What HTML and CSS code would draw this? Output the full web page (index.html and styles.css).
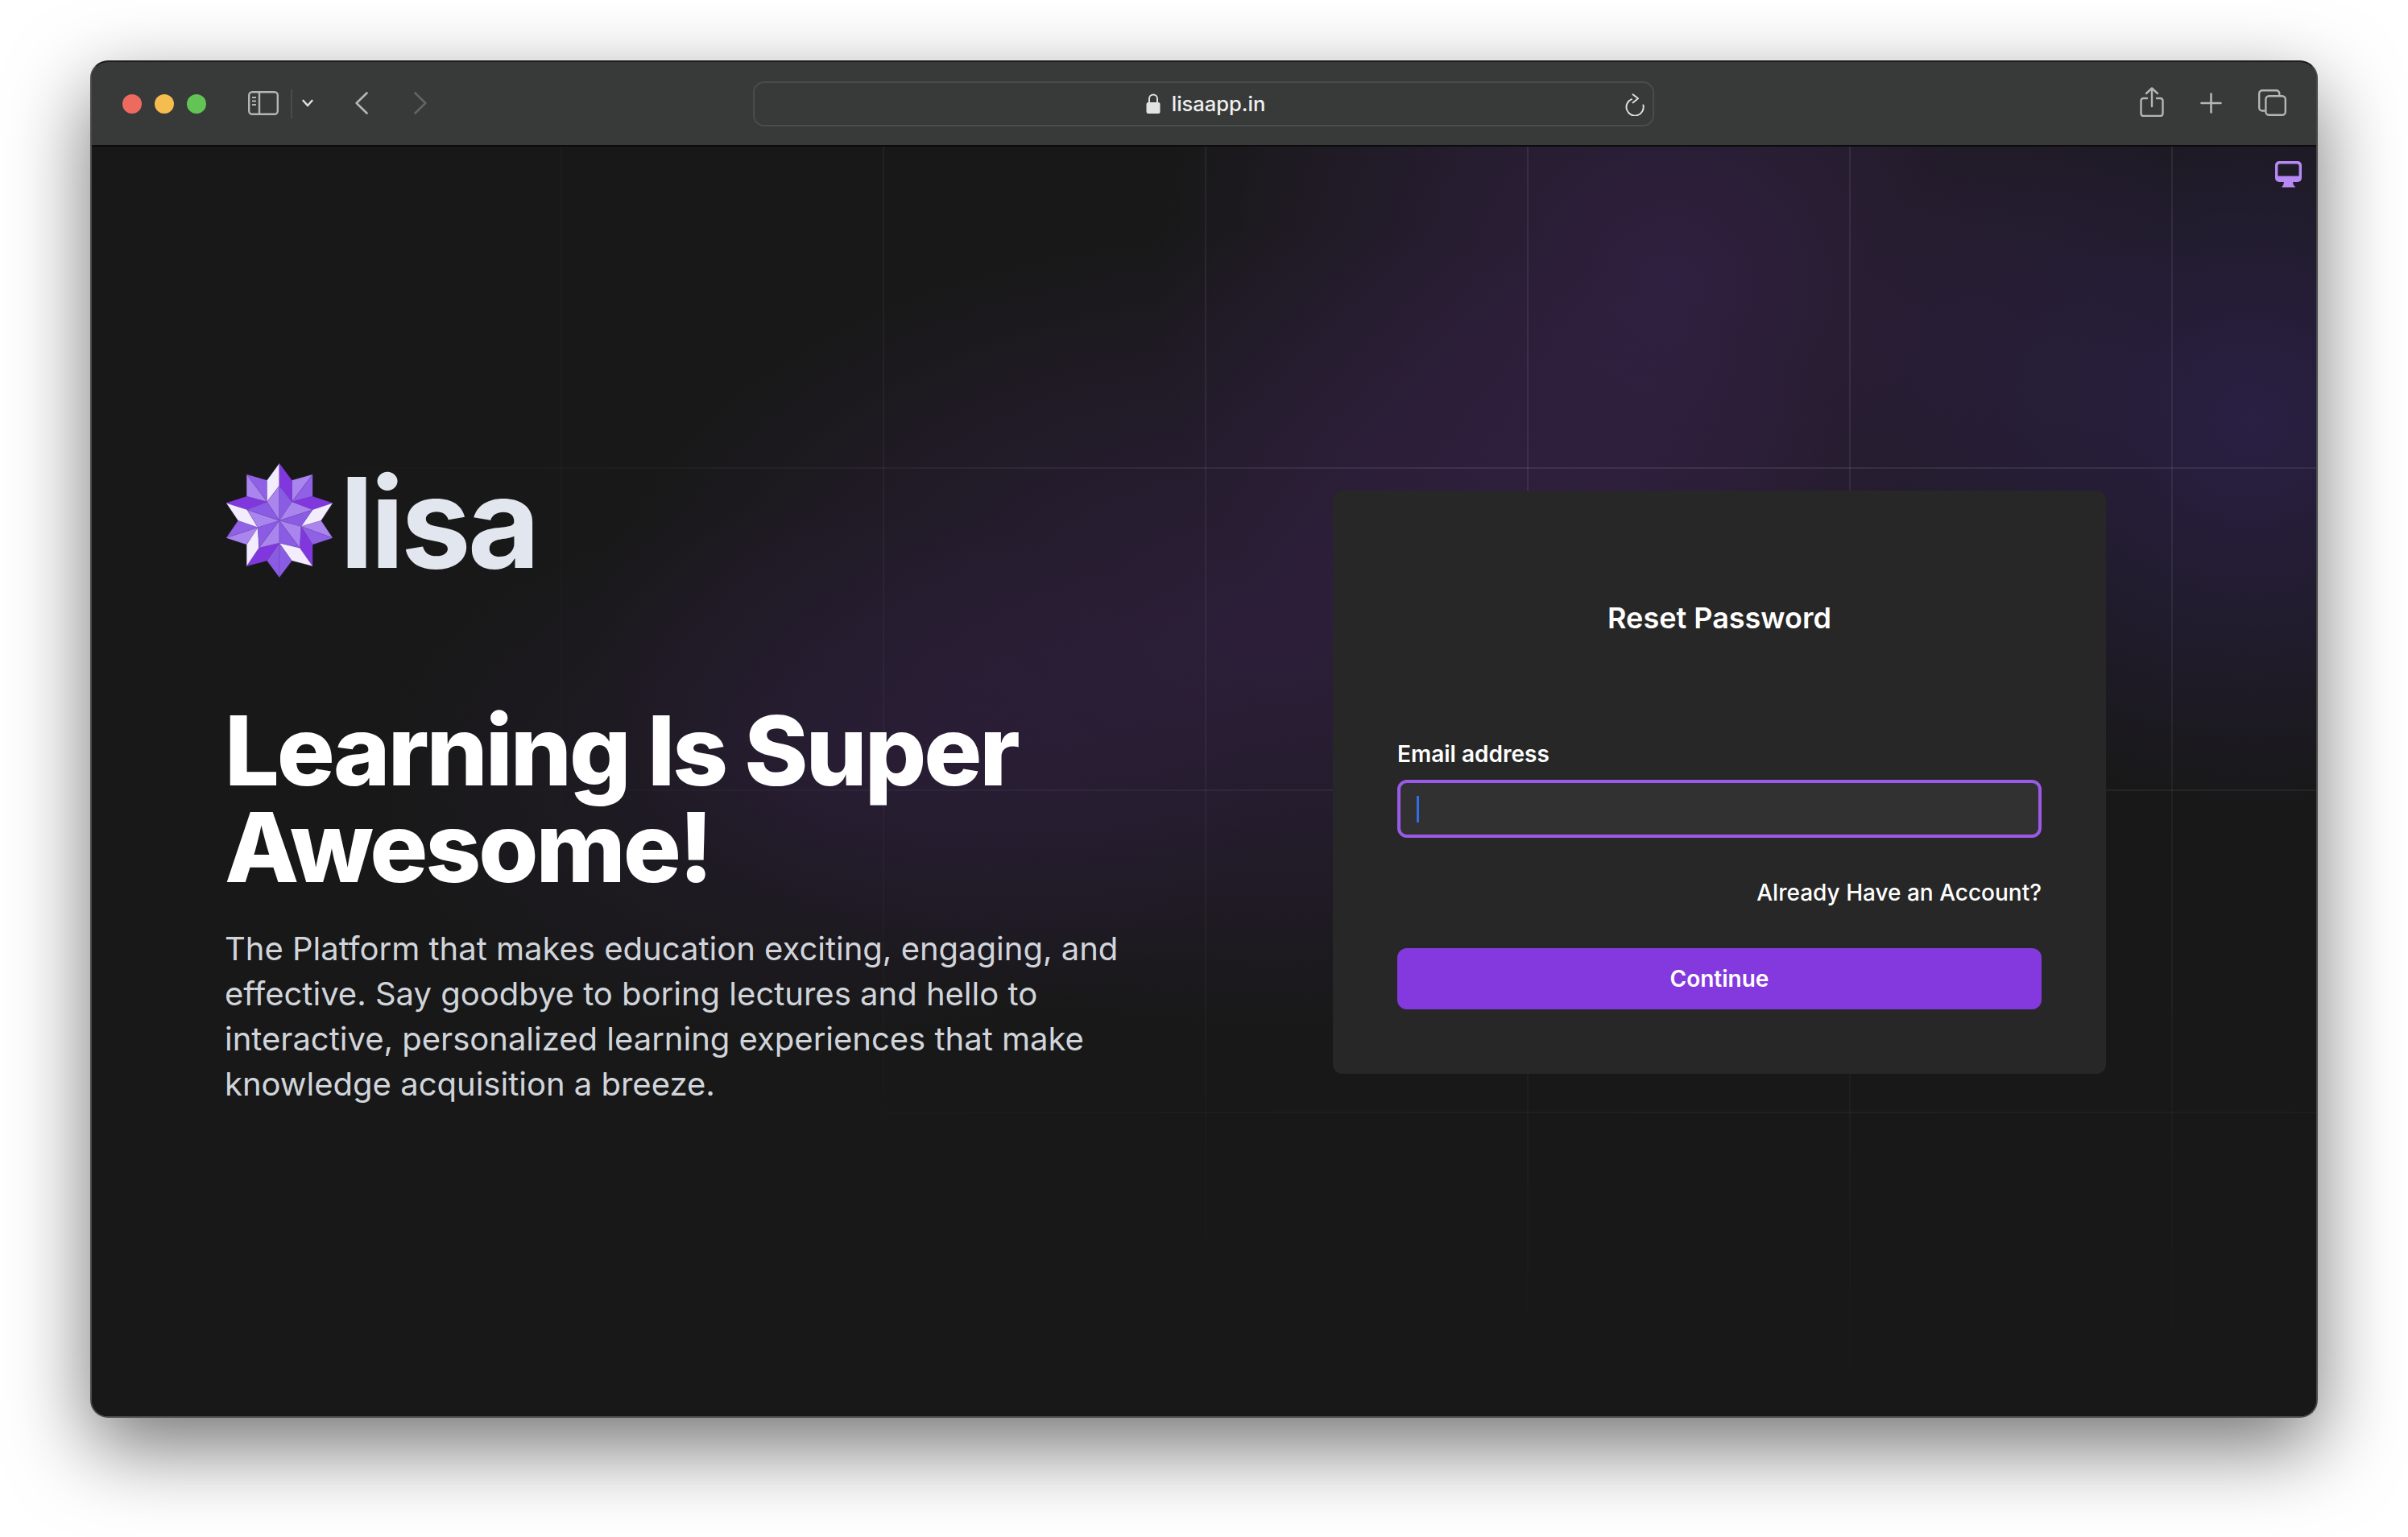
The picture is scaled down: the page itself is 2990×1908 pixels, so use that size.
FILE: index.html
```html
<!DOCTYPE html>
<html lang="en">
<head>
  <meta charset="UTF-8" />
  <title>Lisa - Reset Password</title>
  <link rel="stylesheet" href="styles.css">
</head>
<body>

  <div class="window">

    <!-- Browser toolbar -->
    <header class="toolbar">
      <div class="toolbar-left">
        <span class="light light-red"></span>
        <span class="light light-yellow"></span>
        <span class="light light-green"></span>

        <svg class="icon-sidebar" viewBox="0 0 38 30" fill="none" stroke="#b4b5b4" stroke-width="2.4">
          <rect x="1.2" y="1.2" width="35.6" height="27.6" rx="4"/>
          <path d="M14 1.2v27.6"/>
          <path d="M5 8h5M5 12.5h5M5 17h5" stroke-width="2"/>
        </svg>
        <span class="tool-divider"></span>
        <svg class="icon-chevron" viewBox="0 0 14 10" fill="none" stroke="#dcdcdc" stroke-width="2.6" stroke-linecap="round" stroke-linejoin="round">
          <path d="M1.6 2l5.4 6 5.4-6"/>
        </svg>
        <svg class="icon-back" viewBox="0 0 16 28" fill="none" stroke="#b4b5b4" stroke-width="2.6" stroke-linecap="round" stroke-linejoin="round">
          <path d="M14.5 1.5L1.7 14l12.8 12.5"/>
        </svg>
        <svg class="icon-forward" viewBox="0 0 16 28" fill="none" stroke="#626362" stroke-width="2.6" stroke-linecap="round" stroke-linejoin="round">
          <path d="M1.5 1.5L14.3 14 1.5 26.5"/>
        </svg>
      </div>

      <div class="address-bar">
        <svg class="icon-lock" viewBox="0 0 18 25">
          <path d="M4 12V6.5a5 5 0 0 1 10 0V12" fill="none" stroke="#e2e2e2" stroke-width="2"/>
          <rect x="0.5" y="11" width="17" height="14" rx="2.5" fill="#e2e2e2"/>
        </svg>
        <span class="address-text">lisaapp.in</span>
        <svg class="icon-reload" viewBox="0 0 24 28" fill="none" stroke="#e0e0e0" stroke-width="1.9" stroke-linecap="round" stroke-linejoin="round">
          <path d="M8 7.2A10.6 10.6 0 1 0 22.4 14.5"/>
          <path d="M9.5 1.2l6.5 5-6.5 5.2"/>
        </svg>
      </div>

      <div class="toolbar-right">
        <svg class="icon-share" viewBox="0 0 30 37" fill="none" stroke="#b4b5b4" stroke-width="2.4" stroke-linecap="round" stroke-linejoin="round">
          <path d="M9 14H4.5a3 3 0 0 0-3 3v16a3 3 0 0 0 3 3h21a3 3 0 0 0 3-3V17a3 3 0 0 0-3-3H21"/>
          <path d="M15 24V2M8 8l7-6.5L22 8"/>
        </svg>
        <svg class="icon-plus" viewBox="0 0 27 26" fill="none" stroke="#b4b5b4" stroke-width="2.6" stroke-linecap="round">
          <path d="M13.5 1.5v23M1.5 13h24"/>
        </svg>
        <svg class="icon-tabs" viewBox="0 0 35 33" fill="none" stroke="#b4b5b4" stroke-width="2.4">
          <path d="M8.5 26.5H5a3.8 3.8 0 0 1-3.8-3.8V5A3.8 3.8 0 0 1 5 1.2h17.5A3.8 3.8 0 0 1 26.3 5v3"/>
          <rect x="9.4" y="8.2" width="24.4" height="23.6" rx="4"/>
        </svg>
      </div>
    </header>

    <!-- Page -->
    <main class="page">
      <div class="page-grid"></div>

      <svg class="icon-monitor" viewBox="0 0 33 33">
        <path fill="#b689f4" fill-rule="evenodd" d="M5 0h23a5 5 0 0 1 5 5v16a5 5 0 0 1-5 5H5a5 5 0 0 1-5-5V5a5 5 0 0 1 5-5zM6 3.4A2.6 2.6 0 0 0 3.4 6v12.6h26.2V6A2.6 2.6 0 0 0 27 3.4z"/>
        <path fill="#b689f4" d="M11 26h11l1 4 2.5 2.5h-17.5L10 30z"/>
      </svg>

      <section class="hero">
        <div class="logo">
          <svg class="logo-star" viewBox="18 15 397 425">
            <g stroke="#7a48cf" stroke-width="0.8" stroke-linejoin="round">
              <!-- outer kites -->
              <polygon fill="#ab85ee" points="340,56 263,78 263,158"/>
              <polygon fill="#9060e5" points="340,56 263,158 340,138"/>
              <polygon fill="#ab85ee" points="415,293 372,228 297,250"/>
              <polygon fill="#9060e5" points="415,293 297,250 340,318"/>
              <polygon fill="#8a5ce3" points="216,440 263,378 216,312"/>
              <polygon fill="#8a5ce3" points="216,440 216,312 170,378"/>
              <polygon fill="#9060e5" points="18,293 136,254 62,228"/>
              <polygon fill="#ab85ee" points="18,293 94,318 136,254"/>
              <polygon fill="#9060e5" points="94,56 170,78 170,158"/>
              <polygon fill="#ab85ee" points="94,56 170,158 94,138"/>
              <!-- chevrons -->
              <polygon fill="#f2ecfd" points="216,15 170,78 170,158 216,98"/>
              <polygon fill="#8038de" points="216,15 263,78 263,158 216,98"/>
              <polygon fill="#8038de" points="415,163 340,138 263,158 340,188"/>
              <polygon fill="#f2ecfd" points="415,163 340,188 297,250 372,228"/>
              <polygon fill="#8038de" points="340,398 340,318 297,250 292,330"/>
              <polygon fill="#f2ecfd" points="340,398 292,330 216,312 263,378"/>
              <polygon fill="#8038de" points="94,398 170,378 216,312 140,330"/>
              <polygon fill="#f2ecfd" points="94,398 140,330 136,254 94,318"/>
              <polygon fill="#8038de" points="18,163 94,138 170,158 96,188"/>
              <polygon fill="#f2ecfd" points="18,163 96,188 136,254 62,228"/>
              <!-- inner kites -->
              <polygon fill="#ab85ee" points="216,228 170,158 216,98"/>
              <polygon fill="#8a5ce3" points="216,228 216,98 263,158"/>
              <polygon fill="#ab85ee" points="216,228 263,158 340,188"/>
              <polygon fill="#8a5ce3" points="216,228 340,188 297,250"/>
              <polygon fill="#ab85ee" points="216,228 297,250 292,330"/>
              <polygon fill="#8a5ce3" points="216,228 292,330 216,312"/>
              <polygon fill="#ab85ee" points="216,228 216,312 140,330"/>
              <polygon fill="#8a5ce3" points="216,228 140,330 136,254"/>
              <polygon fill="#ab85ee" points="216,228 136,254 96,188"/>
              <polygon fill="#8a5ce3" points="216,228 96,188 170,158"/>
            </g>
          </svg>
          <span class="logo-text">lisa</span>
        </div>
        <h1 class="hero-title">Learning Is Super Awesome!</h1>
        <p class="hero-copy">The Platform that makes education exciting, engaging, and effective. Say goodbye to boring lectures and hello to interactive, personalized learning experiences that make knowledge acquisition a breeze.</p>
      </section>

      <form class="card">
        <h2 class="card-title">Reset Password</h2>
        <label class="field-label">Email address</label>
        <div class="field"><span class="caret"></span></div>
        <a class="card-link">Already Have an Account?</a>
        <button class="submit-btn" type="button">Continue</button>
      </form>
    </main>

  </div>

</body>
</html>
```

FILE: styles.css
```css
html, body {
  margin: 0;
  height: 100%;
}

body {
  background: #fff;
  font-family: 'Inter', 'Liberation Sans', sans-serif;
  padding: 75px 112px 148px 112px;
  box-sizing: border-box;
  overflow: hidden;
}

/* Browser window */
.window {
  height: 100%;
  box-sizing: border-box;
  display: flex;
  flex-direction: column;
  border: 2px solid #4b4b4b;
  border-top-color: #1c1c1c;
  border-radius: 22px;
  overflow: hidden;
  box-shadow: 0 36px 100px rgba(0, 0, 0, 0.55);
  background: #181818;
}

.toolbar {
  height: 103px;
  flex: none;
  display: flex;
  align-items: center;
  background: #383a39;
  border-bottom: 2px solid #0c0c0c;
}

.toolbar-left {
  width: 821px;
  flex: none;
  box-sizing: border-box;
  display: flex;
  align-items: center;
  padding-left: 38px;
}

.light {
  width: 24px;
  height: 24px;
  border-radius: 50%;
  margin-right: 16px;
}

.light-red { background: #ee6a5f; }
.light-yellow { background: #f5bd4f; }
.light-green { background: #61c454; margin-right: 0; }

.icon-sidebar { width: 38px; height: 30px; margin-left: 52px; margin-top: -1px; }
.tool-divider { width: 2px; height: 36px; margin-left: 15px; background: #4a4c4b; }
.icon-chevron { width: 14px; height: 10px; margin-left: 12px; margin-top: -1px; }
.icon-back { width: 16px; height: 28px; margin-left: 52px; margin-top: -2px; }
.icon-forward { width: 16px; height: 28px; margin-left: 57px; margin-top: -2px; }

.address-bar {
  width: 1119px;
  height: 56px;
  flex: none;
  box-sizing: border-box;
  position: relative;
  display: flex;
  align-items: center;
  justify-content: center;
  gap: 14px;
  padding-left: 5px;
  border: 2px solid #4a4c4b;
  border-radius: 14px;
}

.icon-lock { width: 18px; height: 25px; }

.address-text {
  color: #f0f0f0;
  font-size: 25.5px;
  font-weight: 500;
}

.icon-reload {
  position: absolute;
  right: 10px;
  top: 13px;
  width: 24px;
  height: 28px;
}

.toolbar-right {
  flex: 1;
  display: flex;
  align-items: center;
  justify-content: flex-end;
  gap: 45px;
  padding-right: 37px;
}

.icon-share { width: 30px; height: 37px; margin-top: -4px; }
.icon-plus { width: 27px; height: 26px; margin-top: -2px; }
.icon-tabs { width: 35px; height: 33px; margin-top: -2px; }

/* Page */
.page {
  flex: 1;
  position: relative;
  display: flex;
  align-items: center;
  justify-content: space-between;
  padding: 2px 261px 0 165px;
  background:
    radial-gradient(ellipse 640px 620px at 1960px 170px, rgba(88, 44, 130, 0.38), rgba(88, 44, 130, 0.22) 45%, transparent),
    radial-gradient(ellipse 850px 500px at 1470px 600px, rgba(88, 44, 130, 0.32), rgba(88, 44, 130, 0.18) 50%, transparent),
    radial-gradient(ellipse 520px 480px at 2680px 340px, rgba(72, 44, 140, 0.38), rgba(72, 44, 140, 0.2) 50%, transparent),
    radial-gradient(ellipse 560px 340px at 900px 780px, rgba(84, 44, 130, 0.18), transparent),
    #181818;
}

.page-grid {
  position: absolute;
  inset: 0;
  background-image:
    linear-gradient(to right, rgba(255, 255, 255, 0.075) 2px, transparent 2px),
    linear-gradient(to bottom, rgba(255, 255, 255, 0.085) 2px, transparent 2px);
  background-size: 400px 400px;
  background-position: 182px 398px;
  -webkit-mask-image: radial-gradient(ellipse 1900px 1350px at 2100px 250px, #000 25%, transparent);
  mask-image: radial-gradient(ellipse 1900px 1350px at 2100px 250px, #000 25%, transparent);
}

.icon-monitor {
  position: absolute;
  top: 18px;
  right: 18px;
  width: 33px;
  height: 33px;
}

/* Left column */
.hero {
  position: relative;
  width: 1130px;
  margin-top: 6px;
}

.logo {
  display: flex;
  align-items: center;
  gap: 9px;
  height: 142px;
  margin-left: 2px;
}

.logo-star { width: 132px; height: 142px; flex: none; }

.logo-text {
  color: #e2e6ee;
  font-size: 155px;
  font-weight: 700;
  line-height: 150px;
  letter-spacing: -4px;
  padding-top: 6px;
}

.hero-title {
  margin: 155px 0 0;
  color: #fff;
  font-size: 120px;
  font-weight: 800;
  line-height: 120px;
  letter-spacing: -3px;
}

.hero-copy {
  margin: 38px 0 0;
  color: #d1d5db;
  font-size: 40px;
  line-height: 56px;
}

/* Reset card */
.card {
  position: relative;
  width: 960px;
  box-sizing: border-box;
  padding: 138px 80px 80px;
  background: #272727;
  border-radius: 12px;
  display: flex;
  flex-direction: column;
}

.card-title {
  margin: 0 0 129px;
  color: #fff;
  font-size: 36px;
  font-weight: 600;
  line-height: 40px;
  text-align: center;
}

.field-label {
  color: #fff;
  font-size: 28px;
  font-weight: 600;
  line-height: 40px;
  margin-bottom: 12px;
}

.field {
  height: 72px;
  box-sizing: border-box;
  display: flex;
  align-items: center;
  padding-left: 20px;
  background: #313131;
  border: 4px solid #9a5ae8;
  border-radius: 12px;
}

.caret {
  width: 3px;
  height: 33px;
  background: #2f6fe8;
}

.card-link {
  margin-top: 48px;
  color: #fff;
  font-size: 28px;
  font-weight: 500;
  line-height: 40px;
  text-align: right;
}

.submit-btn {
  margin-top: 49px;
  height: 76px;
  border: 0;
  border-radius: 12px;
  background: #8439de;
  color: #fff;
  font-family: inherit;
  font-size: 28px;
  font-weight: 600;
}
```
